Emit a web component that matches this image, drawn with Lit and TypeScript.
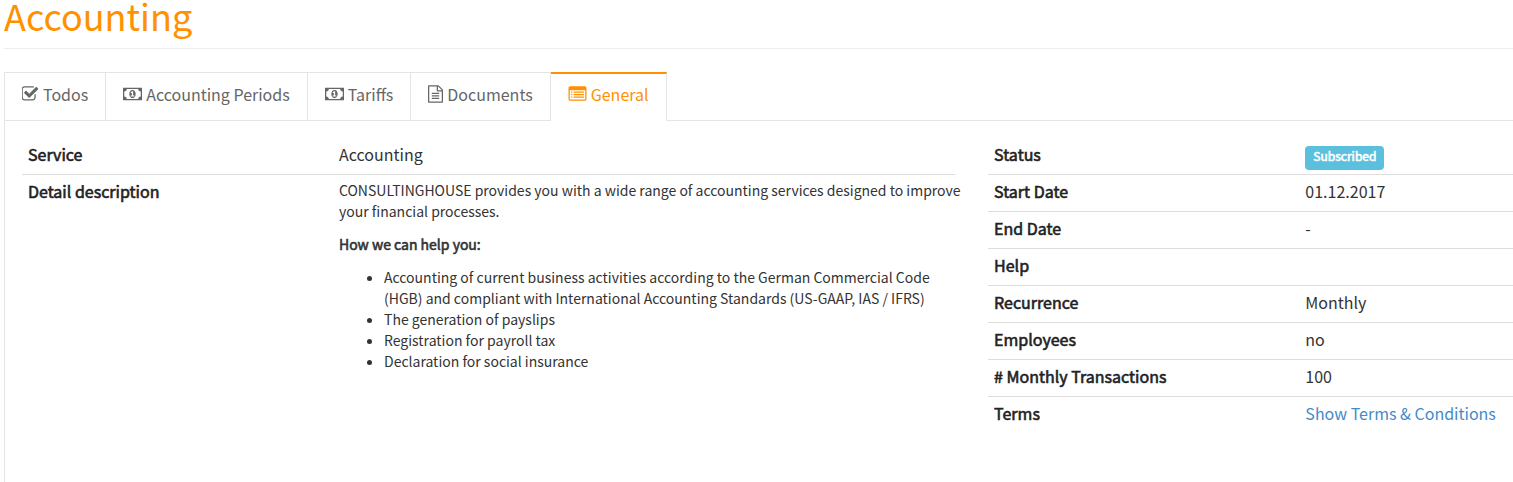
import { LitElement, html, css, svg, nothing } from "lit";
import { customElement, state } from "lit/decorators.js";
import { classMap } from "lit/directives/class-map.js";

const icons = {
  check: {
    box: "128 0 1664 1792",
    cls: "w17",
    d: "M1472 930v318q0 119-84.5 203.5t-203.5 84.5h-832q-119 0-203.5-84.5t-84.5-203.5v-832q0-119 84.5-203.5t203.5-84.5h832q63 0 117 25 15 7 18 23 3 17-9 29l-49 49q-10 10-23 10-3 0-9-2-23-6-45-6h-832q-66 0-113 47t-47 113v832q0 66 47 113t113 47h832q66 0 113-47t47-113v-254q0-13 9-22l64-64q10-10 23-10 6 0 12 3 20 8 20 29zm231-489l-814 814q-24 24-57 24t-57-24l-430-430q-24-24-24-57t24-57l110-110q24-24 57-24t57 24l263 263 647-647q24-24 57-24t57 24l110 110q24 24 24 57t-24 57z",
  },
  money: {
    box: "0 0 1920 1792",
    cls: "w19",
    d: "M768 1152h384v-96h-128v-448h-114l-148 137 77 80q42-37 55-57h2v288h-128v96zm512-256q0 70-21 142t-59.5 134-101.5 101-138 39-138-39-101.5-101-59.5-134-21-142 21-142 59.5-134 101.5-101 138-39 138 39 101.5 101 59.5 134 21 142zm512 256v-512q-106 0-181-75t-75-181h-1152q0 106-75 181t-181 75v512q106 0 181 75t75 181h1152q0-106 75-181t181-75zm128-832v1152q0 26-19 45t-45 19h-1792q-26 0-45-19t-19-45v-1152q0-26 19-45t45-19h1792q26 0 45 19t19 45z",
  },
  file: {
    box: "128 0 1536 1792",
    cls: "w15",
    d: "M1596 380q28 28 48 76t20 88v1152q0 40-28 68t-68 28h-1344q-40 0-68-28t-28-68v-1600q0-40 28-68t68-28h896q40 0 88 20t76 48zm-444-244v376h376q-10-29-22-41l-313-313q-12-12-41-22zm384 1528v-1024h-416q-40 0-68-28t-28-68v-416h-768v1536h1280zM512 800q0-32 32-32h704q32 0 32 32v64q0 32-32 32h-704q-32 0-32-32zM512 1056q0-32 32-32h704q32 0 32 32v64q0 32-32 32h-704q-32 0-32-32zM512 1312q0-32 32-32h704q32 0 32 32v64q0 32-32 32h-704q-32 0-32-32z",
  },
  list: {
    box: "0 0 1792 1792",
    cls: "w19",
    d: "M160 128h1472q66 0 113 47t47 113v1120q0 66-47 113t-113 47h-1472q-66 0-113-47t-47-113v-1120q0-66 47-113t113-47zM160 512q-32 0-32 32v864q0 32 32 32h1472q32 0 32-32v-864q0-32-32-32zM256 640h128v128h-128zM512 640h1024v128h-1024zM256 896h128v128h-128zM512 896h1024v128h-1024zM256 1152h128v128h-128zM512 1152h1024v128h-1024z",
  },
};

type IconName = keyof typeof icons;

const tabs: { label: string; icon: IconName }[] = [
  { label: "Todos", icon: "check" },
  { label: "Accounting Periods", icon: "money" },
  { label: "Tariffs", icon: "money" },
  { label: "Documents", icon: "file" },
  { label: "General", icon: "list" },
];

const facts: { label: string; value: string; kind?: "badge" | "link" }[] = [
  { label: "Status", value: "Subscribed", kind: "badge" },
  { label: "Start Date", value: "01.12.2017" },
  { label: "End Date", value: "-" },
  { label: "Help", value: "" },
  { label: "Recurrence", value: "Monthly" },
  { label: "Employees", value: "no" },
  { label: "# Monthly Transactions", value: "100" },
  { label: "Terms", value: "Show Terms & Conditions", kind: "link" },
];

const services = [
  "Accounting of current business activities according to the German Commercial Code (HGB) and compliant with International Accounting Standards (US-GAAP, IAS / IFRS)",
  "The generation of payslips",
  "Registration for payroll tax",
  "Declaration for social insurance",
];

@customElement("app-root")
export class AppRoot extends LitElement {
  static styles = css`
    :host {
      display: flex;
      flex-direction: column;
      box-sizing: border-box;
      min-height: 100vh;
      padding-left: 4px;
      background: #fff;
      color: #333;
      font-family: "Noto Sans CJK SC", "Source Sans Pro", sans-serif;
      font-size: 16px;
      line-height: 24px;
    }
    .title {
      margin: 0 0 23px;
      padding-bottom: 18px;
      border-bottom: 1px solid #eee;
      color: #ff9100;
      font-size: 36px;
      font-weight: 400;
      line-height: 30px;
    }
    .tabs {
      display: flex;
      border-left: 1px solid #e4e4e4;
    }
    .tabs::after {
      content: "";
      flex: 1;
      border-bottom: 1px solid #e4e4e4;
    }
    .tab {
      display: flex;
      align-items: center;
      gap: 4px;
      box-sizing: border-box;
      height: 49px;
      margin: 0;
      padding: 0 17px 5px;
      border: 0 solid #e4e4e4;
      border-width: 1px 1px 1px 0;
      background: #fff;
      color: #666;
      font: inherit;
      cursor: pointer;
    }
    .tab.active {
      border-top: 2px solid #ff9100;
      border-bottom-color: #fff;
      padding-bottom: 6px;
      color: #ff9100;
    }
    .icon {
      height: 18px;
      fill: currentColor;
    }
    .w15 { width: 15px; }
    .w17 { width: 17px; }
    .w19 { width: 19px; }
    .panel {
      flex: 1;
      display: grid;
      grid-template-columns: 16fr 9fr;
      align-items: start;
      gap: 33px;
      padding: 17px 0 17px 17px;
      border-left: 1px solid #e4e4e4;
    }
    .facts {
      width: 100%;
      border-collapse: separate;
      border-spacing: 0;
      table-layout: fixed;
    }
    .facts th,
    .facts td {
      box-sizing: border-box;
      height: 37px;
      padding: 4px 6px 0;
      text-align: left;
      vertical-align: top;
      border-bottom: 1px solid #ddd;
    }
    .facts tr:last-child > * {
      border-bottom: 0;
    }
    .facts th {
      font-weight: 400;
      color: #222;
    }
    .facts th,
    .strong,
    .badge {
      -webkit-text-stroke: 0.6px currentColor;
    }
    .main th { width: 33.33%; }
    .side th { width: 59.3%; }
    .facts .text {
      padding-top: 5px;
      font-size: 14px;
      line-height: 21px;
    }
    .text p {
      margin: 0 -16px 12px 0;
    }
    .text ul {
      margin: 0;
      padding-left: 45px;
    }
    .badge {
      display: block;
      width: fit-content;
      margin-top: 4px;
      padding: 0 8px 4px;
      border-radius: 4px;
      background: #5bc0de;
      color: #fff;
      font-size: 12px;
      line-height: 20px;
    }
    .link {
      color: #428bca;
      text-decoration: none;
    }
  `;

  @state() private active = "General";

  private icon(name: IconName) {
    const { box, cls, d } = icons[name];
    return html`<svg class="icon ${cls}" viewBox=${box} aria-hidden="true">
      ${svg`<path fill-rule="evenodd" d=${d}></path>`}
    </svg>`;
  }

  private value(value: string, kind?: "badge" | "link") {
    if (kind === "badge") return html`<span class="badge">${value}</span>`;
    if (kind === "link") return html`<a class="link" href="#terms">${value}</a>`;
    return value || nothing;
  }

  render() {
    return html`
      <h1 class="title">Accounting</h1>
      <div class="tabs" role="tablist">
        ${tabs.map(
          (t) => html`<button
            type="button"
            role="tab"
            aria-selected=${t.label === this.active ? "true" : "false"}
            class=${classMap({ tab: true, active: t.label === this.active })}
            @click=${() => (this.active = t.label)}
          >${this.icon(t.icon)}<span>${t.label}</span></button>`
        )}
      </div>
      <div class="panel" role="tabpanel">
        <table class="facts main">
          <tbody>
            <tr>
              <th scope="row">Service</th>
              <td>Accounting</td>
            </tr>
            <tr>
              <th scope="row">Detail description</th>
              <td class="text">
                <p>
                  CONSULTINGHOUSE provides you with a wide range of accounting services
                  designed to improve your financial processes.
                </p>
                <p class="strong">How we can help you:</p>
                <ul>
                  ${services.map((s) => html`<li>${s}</li>`)}
                </ul>
              </td>
            </tr>
          </tbody>
        </table>
        <table class="facts side">
          <tbody>
            ${facts.map(
              (f) => html`<tr>
                <th scope="row">${f.label}</th>
                <td>${this.value(f.value, f.kind)}</td>
              </tr>`
            )}
          </tbody>
        </table>
      </div>
    `;
  }
}
